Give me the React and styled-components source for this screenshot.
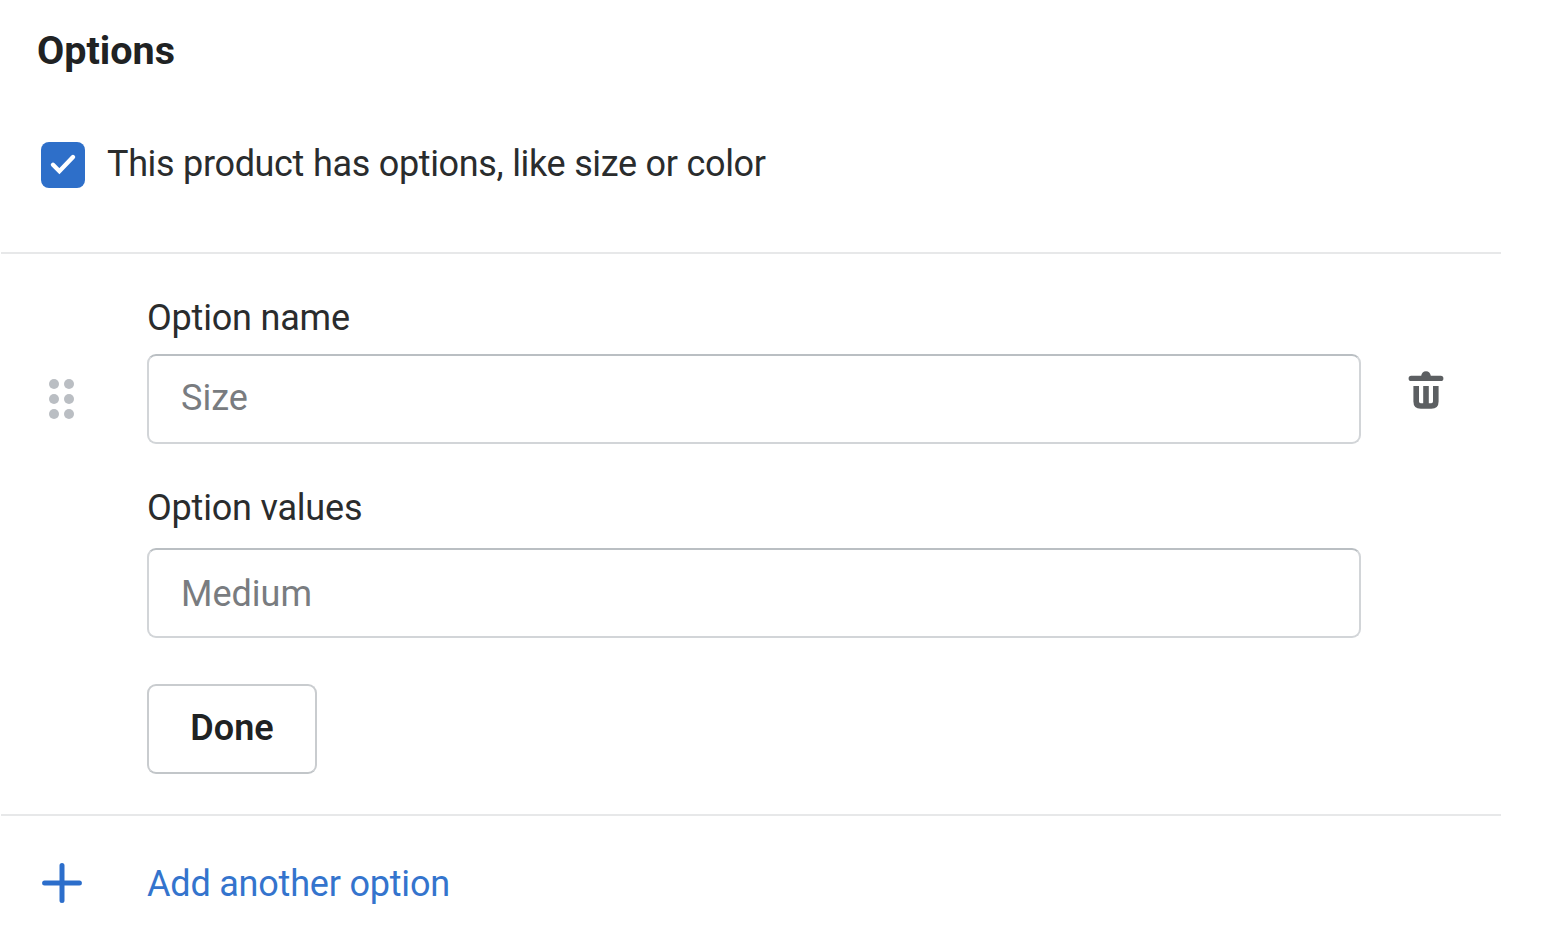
import { useState } from "react";
import styled, { createGlobalStyle } from "styled-components";

const App = () => {
  const [hasOptions, setHasOptions] = useState(true);

  return (
    <>
      <GlobalStyle />
      <Card>
        <Header>
          <Title>Options</Title>
          <CheckboxRow>
            <HiddenInput
              type="checkbox"
              checked={hasOptions}
              onChange={() => setHasOptions(!hasOptions)}
            />
            <Box $checked={hasOptions}>
              {hasOptions && (
                <svg width="44" height="46" viewBox="0 0 44 46">
                  <path
                    d="M12 22.8 L18.4 29.2 L32 15"
                    fill="none"
                    stroke="#fff"
                    strokeWidth="4.4"
                    strokeLinecap="round"
                    strokeLinejoin="miter"
                  />
                </svg>
              )}
            </Box>
            <span>This product has options, like size or color</span>
          </CheckboxRow>
        </Header>

        <OptionSection>
          <DragHandle aria-label="Reorder">
            {[0, 1, 2, 3, 4, 5].map((dot) => (
              <Dot key={dot} />
            ))}
          </DragHandle>
          <Fields>
            <Label htmlFor="name">Option name</Label>
            <Input id="name" placeholder="Size" />
            <ValuesLabel htmlFor="values">Option values</ValuesLabel>
            <Input id="values" placeholder="Medium" $low />
            <DoneButton type="button">Done</DoneButton>
          </Fields>
          <DeleteButton type="button" aria-label="Delete option">
            <svg width="36" height="40" viewBox="0 0 36 40" fill="#5c5f62">
              <path d="M13.2 5.8 C13.6 3 15.3 1.2 18 1.2 S22.4 3 22.8 5.8 H32.8 a2.6 2.6 0 0 1 0 5.2 H3.2 a2.6 2.6 0 0 1 0 -5.2 Z" />
              <path
                d="M8.2 16 V31.5 Q8.2 36 12.7 36 H23.3 Q27.8 36 27.8 31.5 V16 M18 16 V35"
                fill="none"
                stroke="#5c5f62"
                strokeWidth="5.6"
              />
            </svg>
          </DeleteButton>
        </OptionSection>

        <AddButton type="button">
          <svg width="40" height="40" viewBox="0 0 40 40">
            <path
              d="M2.6 20 H37.4 M20 2.6 V37.4"
              stroke="#2c6ecb"
              strokeWidth="5"
              strokeLinecap="round"
            />
          </svg>
          Add another option
        </AddButton>
      </Card>
    </>
  );
};

const GlobalStyle = createGlobalStyle`
  * {
    box-sizing: border-box;
  }
  body {
    margin: 0;
    background: #fff;
    color: #2a2c2d;
    font-family: Roboto, sans-serif;
    font-size: 36px;
  }
  button,
  input {
    font: inherit;
    margin: 0;
  }
  svg {
    display: block;
    flex-shrink: 0;
  }
`;

const Card = styled.section`
  width: 1500px;
  height: 944px;
  margin-left: 1px;
  overflow: hidden;
`;

const Header = styled.div`
  height: 252px;
  padding: 25px 36px 0;
`;

const Title = styled.h2`
  margin: 0 0 65px;
  color: #202223;
  font-size: 39.5px;
  font-weight: 700;
  line-height: 52px;
`;

const CheckboxRow = styled.label`
  display: flex;
  gap: 22px;
  padding-left: 4px;
  line-height: 45px;
  letter-spacing: -0.35px;
  word-spacing: 0.3px;
  cursor: pointer;
`;

const HiddenInput = styled.input`
  position: absolute;
  opacity: 0;
  pointer-events: none;
`;

const Box = styled.span`
  width: 44px;
  height: 46px;
  border-radius: 8px;
  border: ${({ $checked }) => ($checked ? "none" : "4px solid #8c9196")};
  background: ${({ $checked }) => ($checked ? "#2e6fc9" : "#fff")};
`;

const OptionSection = styled.div`
  display: grid;
  grid-template-columns: 146px 1214px 1fr;
  height: 564px;
  border-top: 2px solid #e7e8e9;
  border-bottom: 2px solid #e7e8e9;
`;

const DragHandle = styled.div`
  display: grid;
  grid-template-columns: 10px 10px;
  grid-auto-rows: 10px;
  gap: 5px;
  align-content: start;
  padding: 125px 0 0 48.4px;
  cursor: grab;
`;

const Dot = styled.span`
  border-radius: 50%;
  background: #babec3;
`;

const Fields = styled.div`
  display: flex;
  flex-direction: column;
  align-items: flex-start;
  padding-top: 40px;
`;

const Label = styled.label`
  height: 60px;
  line-height: 48px;
  letter-spacing: -0.2px;
`;

const ValuesLabel = styled(Label)`
  height: 64px;
  margin-top: 40px;
`;

const Input = styled.input`
  width: 100%;
  height: 90px;
  padding: ${({ $low }) => ($low ? "1px 32px 0" : "0 32px 3px")};
  border: 2px solid #d2d5d8;
  border-top-color: #babfc3;
  border-radius: 9px;
  background: #fff;
  outline: none;

  &::placeholder {
    color: #797c80;
    opacity: 1;
  }
`;

const DoneButton = styled.button`
  width: 170px;
  height: 90px;
  margin-top: 46px;
  padding: 0 0 2px;
  border: 2px solid #c9cccf;
  border-bottom-color: #c2c6c9;
  border-radius: 9px;
  background: #fff;
  color: #202223;
  font-weight: 600;
`;

const DeleteButton = styled.button`
  align-self: start;
  padding: 0;
  margin: 116px 0 0 47px;
  border: none;
  background: none;
`;

const AddButton = styled.button`
  display: flex;
  align-items: flex-start;
  gap: 65px;
  margin: 43px 0 0 41px;
  padding: 0;
  border: none;
  background: none;
  color: #3474cd;
  line-height: 50px;
  letter-spacing: -0.2px;

  svg {
    margin-top: 4px;
  }
`;

export default App;
